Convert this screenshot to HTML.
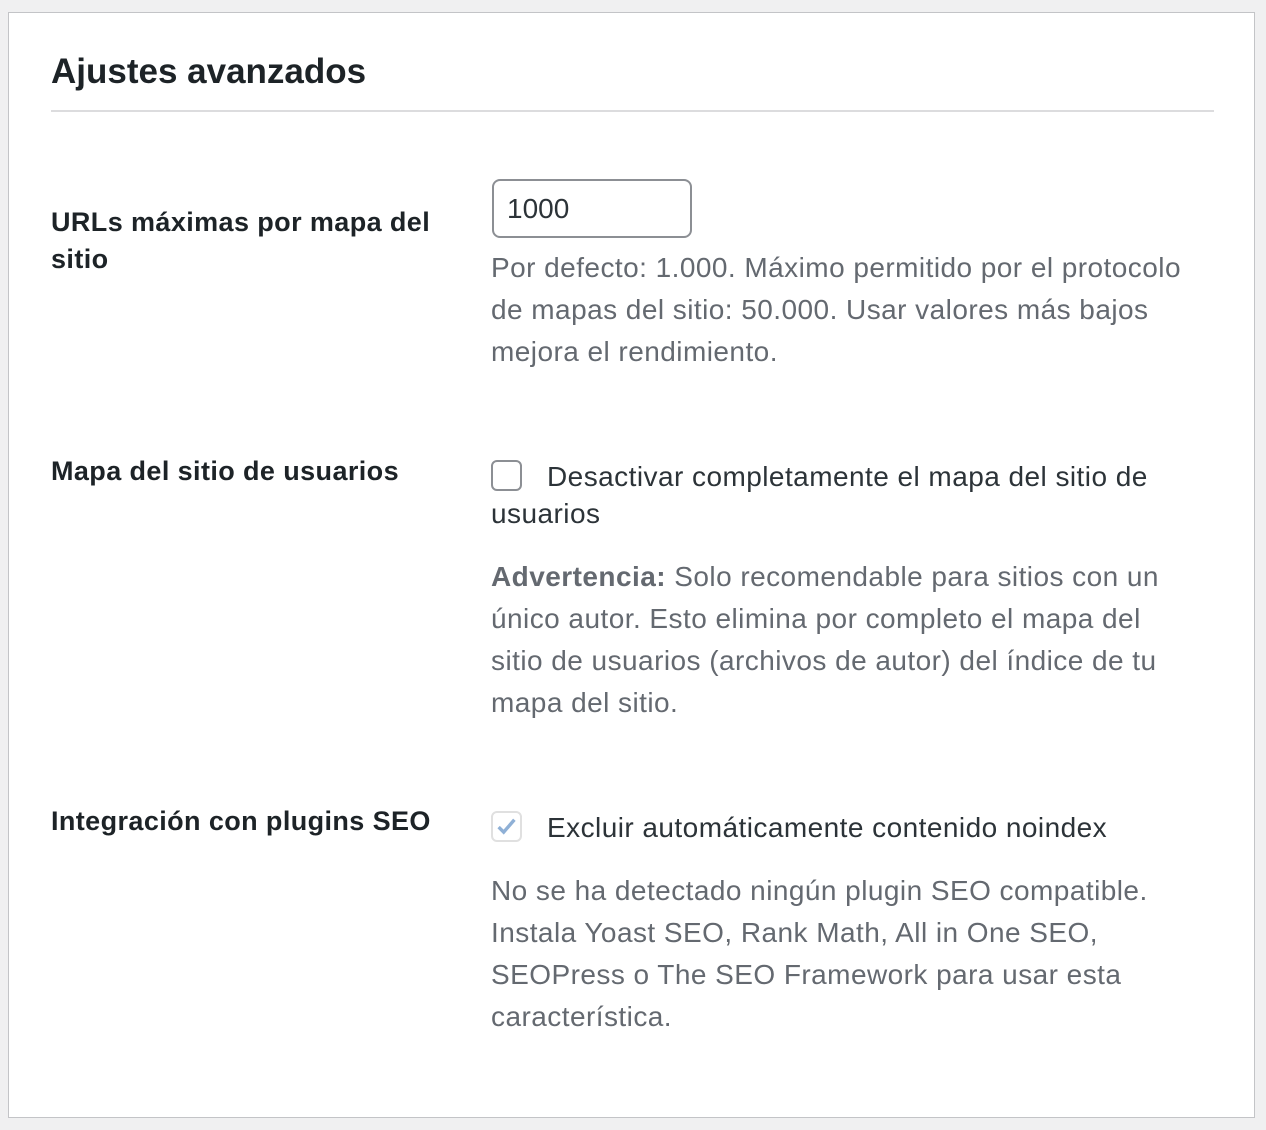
<!DOCTYPE html>
<html><head><meta charset="utf-8"><style>
html,body{margin:0;padding:0;background:#f0f0f1;width:1266px;height:1130px;overflow:hidden;font-family:"Liberation Sans",Arial,sans-serif;}
.panel{position:absolute;left:8px;top:12px;width:1245px;height:1104px;background:#fff;border:1px solid #c3c4c7;}
.abs{position:absolute;}
h2{position:absolute;left:42px;top:39px;margin:0;font-size:35px;font-weight:bold;color:#1d2327;letter-spacing:0px;}
.hr{position:absolute;left:42px;top:97px;width:1163px;height:2px;background:#dcdcde;}
.lbl{position:absolute;left:42px;font-size:27px;font-weight:bold;color:#1d2327;line-height:37px;width:420px;letter-spacing:0.4px;white-space:nowrap;}
.desc{position:absolute;left:482px;font-size:28px;color:#646970;line-height:42px;width:760px;letter-spacing:0.45px;white-space:nowrap;}
.opt{position:absolute;left:482px;font-size:28px;color:#2c3338;line-height:37px;width:760px;letter-spacing:0.45px;white-space:nowrap;}
.cb{display:inline-block;width:31px;height:31px;border:2px solid #8c8f94;border-radius:6px;box-sizing:border-box;vertical-align:-5px;margin-right:25px;position:relative;}
.cb.dis{border-color:#e0e0e0;}
</style></head><body>
<div class="panel">
<h2>Ajustes avanzados</h2>
<div class="hr"></div>
<div class="lbl" style="top:191px">URLs máximas por mapa del<br>sitio</div>
<div class="abs" style="left:483px;top:166px;width:200px;height:59px;border:2px solid #8c8f94;border-radius:8px;box-sizing:border-box;font-size:28px;color:#2c3338;line-height:55px;padding-left:13px;">1000</div>
<div class="desc" style="top:234px">Por defecto: 1.000. Máximo permitido por el protocolo<br>de mapas del sitio: 50.000. Usar valores más bajos<br>mejora el rendimiento.</div>

<div class="lbl" style="top:440px">Mapa del sitio de usuarios</div>
<div class="opt" style="top:445px"><span class="cb"></span>Desactivar completamente el mapa del sitio de<br>usuarios</div>
<div class="desc" style="top:543px"><b>Advertencia:</b> Solo recomendable para sitios con un<br>único autor. Esto elimina por completo el mapa del<br>sitio de usuarios (archivos de autor) del índice de tu<br>mapa del sitio.</div>

<div class="lbl" style="top:790px">Integración con plugins SEO</div>
<div class="opt" style="top:796px"><span class="cb dis"><svg width="27" height="27" viewBox="0 0 24 24" style="position:absolute;left:0;top:0"><path d="M5 12.5l4.5 4.5L19 6" fill="none" stroke="#8fb0d6" stroke-width="3"/></svg></span>Excluir automáticamente contenido noindex</div>
<div class="desc" style="top:857px">No se ha detectado ningún plugin SEO compatible.<br>Instala Yoast SEO, Rank Math, All in One SEO,<br>SEOPress o The SEO Framework para usar esta<br>característica.</div>
</div>
</body></html>
